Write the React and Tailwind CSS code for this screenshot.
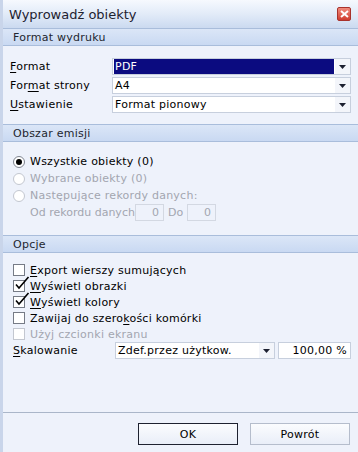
import React from 'react';

const font = { fontFamily: '"DejaVu Sans", Verdana, sans-serif' };

function U({ children }) {
  return <span className="underline underline-offset-2">{children}</span>;
}

function Arrow() {
  return (
    <svg width="7" height="4" viewBox="0 0 7 4" className="block">
      <path d="M0 0h7L3.5 4z" fill="#1c2030" />
    </svg>
  );
}

function Combo({ value, selected, className = '' }) {
  return (
    <div className={`flex h-[17px] items-stretch border border-[#c7cfdd] bg-white ${className}`}>
      <div className="flex flex-1 items-center px-[1px]">
        <div
          className={`flex h-full w-full items-center pl-[1px] ${
            selected ? 'bg-[#0b0b80] text-white' : 'text-black'
          }`}
        >
          {value}
        </div>
      </div>
      <div className="flex w-[15px] items-center justify-center bg-[#f3f5fa]">
        <Arrow />
      </div>
    </div>
  );
}

function Header({ children }) {
  return (
    <div className="flex h-[18px] shrink-0 items-center border-y border-[#a9bddb] bg-gradient-to-b from-[#dbe6f7] to-[#c9d9f2] pl-[10px] text-[#22262f]">
      {children}
    </div>
  );
}

function Radio({ checked, disabled, children }) {
  return (
    <div className={`flex h-[17px] items-center gap-[5px] ${disabled ? 'text-[#a3a6b0]' : 'text-black'}`}>
      <span
        className={`flex h-[12px] w-[12px] items-center justify-center rounded-full border bg-white ${
          disabled ? 'border-[#c3c7d0]' : 'border-[#808590]'
        }`}
      >
        {checked && <span className="h-[6px] w-[6px] rounded-full bg-black" />}
      </span>
      <span>{children}</span>
    </div>
  );
}

function Check({ checked, disabled, children }) {
  return (
    <div className={`flex h-[16px] items-center gap-[5px] ${disabled ? 'text-[#a3a6b0]' : 'text-black'}`}>
      <span
        className={`relative h-[12px] w-[12px] border bg-white ${
          disabled ? 'border-[#c3c7d0]' : 'border-[#767b86]'
        }`}
      >
        {checked && (
          <svg width="16" height="15" viewBox="0 0 16 15" className="absolute -top-[5px] left-[0px] overflow-visible">
            <path d="M2 8.5 L5 12 L14.5 1" stroke="#000" strokeWidth="1.6" fill="none" />
          </svg>
        )}
      </span>
      <span>{children}</span>
    </div>
  );
}

function Field({ value }) {
  return (
    <div className="flex h-[17px] w-[29px] items-center justify-end border border-[#d3d8e2] bg-[#eef2fb] pr-[4px] text-[#a3a6b0]">
      {value}
    </div>
  );
}

export default function App() {
  return (
    <div
      className="flex h-[452px] w-[358px] flex-col overflow-hidden border-l-[3px] border-[#c9d5ea] bg-[#eef2fb] text-[11px] leading-none tracking-[0.25px]"
      style={font}
    >
      {/* title bar */}
      <div className="-ml-[3px] flex h-[28px] shrink-0 items-center justify-between bg-gradient-to-b from-[#f6f9fe] via-[#e2ebf8] to-[#cbdaf0] pl-[9px] pr-[7px]">
        <span className="text-[13px] tracking-normal text-[#1e2230]">Wyprowadź obiekty</span>
        <span className="flex h-[14px] w-[14px] items-center justify-center rounded-[2px] border border-[#a8322c] bg-gradient-to-b from-[#f08a7c] to-[#cf3b2e]">
          <svg width="9" height="8" viewBox="0 0 9 8">
            <path d="M1 1 L8 7 M8 1 L1 7" stroke="#fff" strokeWidth="2" />
          </svg>
        </span>
      </div>

      <Header>Format wydruku</Header>
      <div className="flex shrink-0 flex-col gap-[2px] pl-[7px] pr-[7px] pt-[12px] pb-[11px]">
        <div className="flex items-center">
          <span className="w-[102px]"><U>F</U>ormat</span>
          <Combo value="PDF" selected className="flex-1" />
        </div>
        <div className="flex items-center">
          <span className="w-[102px]">For<U>m</U>at strony</span>
          <Combo value="A4" className="flex-1" />
        </div>
        <div className="flex items-center">
          <span className="w-[102px]"><U>U</U>stawienie</span>
          <Combo value="Format pionowy" className="flex-1" />
        </div>
      </div>

      <Header>Obszar emisji</Header>
      <div className="flex shrink-0 flex-col pl-[10px] pt-[11px] pb-[14px]">
        <Radio checked>Wszystkie obiekty (0)</Radio>
        <Radio disabled>Wybrane obiekty (0)</Radio>
        <Radio disabled>Następujące rekordy danych:</Radio>
        <div className="flex h-[17px] items-center pl-[17px] tracking-normal text-[#a3a6b0]">
          <span>Od rekordu danych</span>
          <Field value="0" />
          <span className="mx-[4px]">Do</span>
          <Field value="0" />
        </div>
      </div>

      <Header>Opcje</Header>
      <div className="flex shrink-0 flex-col pl-[10px] pr-[7px] pt-[9px]">
        <Check><U>E</U>xport wierszy sumujących</Check>
        <Check checked><U>W</U>yświetl obrazki</Check>
        <Check checked><U>W</U>yświetl kolory</Check>
        <Check>Zawijaj do szero<U>k</U>ości komórki</Check>
        <Check disabled>Użyj czcionki ekranu</Check>
        <div className="flex h-[17px] items-center">
          <span className="w-[102px]"><U>S</U>kalowanie</span>
          <Combo value="Zdef.przez użytkow." className="w-[160px]" />
          <div className="ml-[3px] flex h-[17px] flex-1 items-center justify-end border border-[#c7cfdd] bg-white pr-[3px]">
            100,00 %
          </div>
        </div>
      </div>

      <div className="flex-1" />

      <div className="flex h-[40px] shrink-0 items-start justify-end gap-[12px] border-t border-[#aab6c9] pt-[10px] pr-[8px]">
        <button className="h-[22px] w-[100px] border border-[#1e2230] bg-gradient-to-b from-[#fbfcfe] to-[#e9eef8] text-black">
          OK
        </button>
        <button className="h-[22px] w-[100px] border border-[#b5bdcc] bg-gradient-to-b from-[#fbfcfe] to-[#e9eef8] text-black">
          Powrót
        </button>
      </div>
    </div>
  );
}
